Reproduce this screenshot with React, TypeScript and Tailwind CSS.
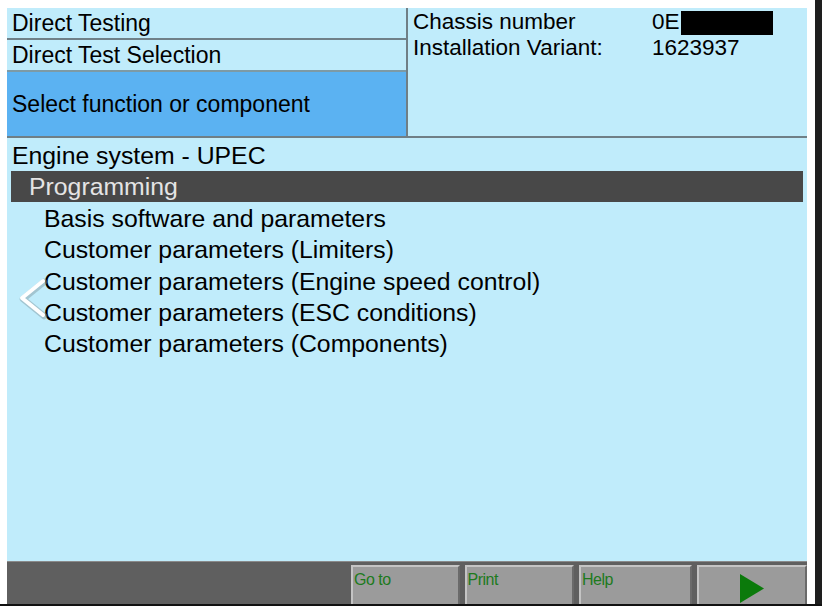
import React from 'react'

const font = { fontFamily: '"Liberation Sans", Arial, sans-serif' }

const items = [
  'Basis software and parameters',
  'Customer parameters (Limiters)',
  'Customer parameters (Engine speed control)',
  'Customer parameters (ESC conditions)',
  'Customer parameters (Components)',
]

function FooterButton({ label, children }: { label?: string; children?: React.ReactNode }) {
  return (
    <div className="relative h-full bg-[#9b9b9b] border-t-2 border-l-2 border-[#c4c4c4] border-r-2 border-r-[#6a6a6a]">
      {label && (
        <span className="absolute left-[1px] top-[3px] text-[16px] leading-[20px] text-[#1d7a1d] tracking-[-0.5px]">
          {label}
        </span>
      )}
      {children}
    </div>
  )
}

export default function App() {
  return (
    <div className="relative w-[822px] h-[606px] bg-white overflow-hidden text-black" style={font}>
      {/* screen */}
      <div className="absolute left-[7px] top-[8px] w-[800px] h-[596px] flex flex-col bg-[#c0ecfb]">
        {/* ================= HEADER ================= */}
        <div className="flex h-[130px] border-b-2 border-[#6f7f86] shrink-0">
          <div className="w-[401px] flex flex-col border-r-2 border-[#6f7f86]">
            <div className="h-[32px] border-b-2 border-[#6f8088] pl-[5px] text-[23px] leading-[31px]">
              Direct Testing
            </div>
            <div className="h-[32px] border-b-2 border-[#7d9aa6] pl-[5px] text-[23px] leading-[30px]">
              Direct Test Selection
            </div>
            <div className="flex-1 bg-[#5bb2f2] pl-[5px] text-[23px] flex items-center">
              Select function or component
            </div>
          </div>
          <div className="flex-1 pl-[5px] pt-[1px] text-[22.5px] leading-[25px]">
            <div className="flex">
              <span className="w-[239px]">Chassis number</span>
              <span>0E</span>
              <span className="ml-[1px] mt-[2px] w-[92px] h-[24px] bg-black"></span>
            </div>
            <div className="flex">
              <span className="w-[239px]">Installation Variant:</span>
              <span>1623937</span>
            </div>
          </div>
        </div>

        {/* ================= LIST ================= */}
        <div className="flex-1 relative">
          <div className="pl-[5px] pt-[4px] text-[24.8px] leading-[28px]">Engine system - UPEC</div>
          <div className="mx-[4px] mt-[1px] h-[31px] bg-[#484848] text-[#e4e4e4] pl-[18px] text-[24.8px] leading-[31px]">
            Programming
          </div>
          <div className="pl-[37px] pt-[1px]">
            {items.map((t) => (
              <div key={t} className="text-[24.8px] leading-[31.25px]">
                {t}
              </div>
            ))}
          </div>

          {/* back chevron */}
          <svg
            className="absolute left-[10px] top-[140px]"
            width="32"
            height="42"
            viewBox="0 0 32 42"
          >
            <path d="M27 4 L6 21 L27 38" fill="none" stroke="#7f969e" strokeWidth="6.5" strokeLinecap="round" strokeLinejoin="round" opacity="0.45" />
            <path d="M26 3 L5 20 L26 37" fill="none" stroke="#ffffff" strokeWidth="4" strokeLinecap="round" strokeLinejoin="round" />
          </svg>
        </div>

        {/* ================= FOOTER ================= */}
        <div className="h-[43px] shrink-0 bg-[#5f5f5f] border-t border-[#8a8a8a] flex pt-[3px] pl-[344px] gap-[5px]">
          <div className="w-[109px]"><FooterButton label="Go to" /></div>
          <div className="w-[110px]"><FooterButton label="Print" /></div>
          <div className="w-[113px]"><FooterButton label="Help" /></div>
          <div className="w-[111px]">
            <FooterButton>
              <svg className="absolute left-[41px] top-[7px]" width="24" height="29" viewBox="0 0 24 29">
                <polygon points="0,0 24,14.5 0,29" fill="#0b7a0b" />
              </svg>
            </FooterButton>
          </div>
        </div>
      </div>

      {/* right frame */}
      <div className="absolute right-0 top-0 w-[7px] h-full bg-[#1e1e1e]"></div>
      {/* bottom frame */}
      <div className="absolute left-0 bottom-0 w-full h-[2px] bg-[#111]"></div>
    </div>
  )
}
